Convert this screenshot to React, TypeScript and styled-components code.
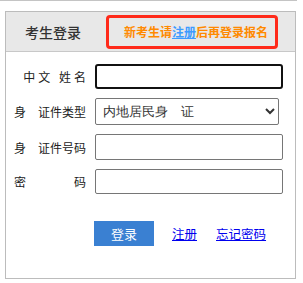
import React from 'react'
import styled, { createGlobalStyle } from 'styled-components'

const GlobalStyle = createGlobalStyle`
body {
    margin: 0;
    background: #fff;
    font-family: "Microsoft YaHei", "Noto Sans CJK SC", sans-serif;
}
`
const Page = styled.div`
width : 297px;
border-top : 1px solid #c4c4c4;
padding-top : 10px;
`
const Card = styled.div`
margin-left : 5px;
width : 291px;
height : 268px;
box-sizing : border-box;
border : 1px solid #bcbcbc;
`
const Header = styled.div`
height : 39px;
background : #e8e8e8;
border-bottom : 1px solid #c8c8c8;
display : flex;
align-items : center;
`
const Title = styled.div`
width : 100px;
padding-left : 19px;
box-sizing : border-box;
font-size : 14px;
font-weight : 500;
color : #333;
`
const Notice = styled.div`
width : 172px;
height : 34px;
box-sizing : border-box;
border : 3px solid #ff2a1a;
border-radius : 4px;
display : flex;
align-items : center;
padding-left : 15px;
font-size : 12px;
font-weight : bold;
color : #ff8a00;
white-space : nowrap;
a {
    color : #3d9bff;
    text-decoration : underline;
}
`
const Form = styled.div`
padding-top : 12px;
display : flex;
flex-direction : column;
gap : 9px;
`
const Row = styled.div`
display : flex;
align-items : center;
`
// spaced label carries a trailing letter-spacing, so its box is 3px wider
const Label = styled.div<{ $spaced?: boolean }>`
flex : none;
width : ${p => p.$spaced ? '83px' : '80px'};
text-align : right;
font-size : 12px;
color : #222;
white-space : pre;
letter-spacing : ${p => p.$spaced ? '3px' : '0'};
margin-right : ${p => p.$spaced ? '6px' : '9px'};
`
const Input = styled.input<{ $h: number; $focused?: boolean }>`
flex : none;
width : 188px;
height : ${p => p.$h}px;
box-sizing : border-box;
border : ${p => p.$focused ? '2px solid #111' : '1px solid #767676'};
border-radius : ${p => p.$focused ? '3px' : '2px'};
outline : none;
padding : 0 4px;
font-size : 13px;
`
const Select = styled.select`
flex : none;
width : 184px;
height : 27px;
box-sizing : border-box;
border : 1px solid #767676;
border-radius : 2px;
font-size : 13px;
color : #333;
padding-left : 3px;
background : #fff;
`
const Actions = styled.div`
margin-top : 27px;
padding-left : 88px;
display : flex;
align-items : center;
`
const LoginBtn = styled.button`
width : 60px;
height : 25px;
border : none;
background : #3a80d2;
color : #fff;
font-size : 13px;
font-family : inherit;
margin-right : 18px;
`
const Link = styled.a`
color : #0000ee;
text-decoration : underline;
font-size : 12.5px;
margin-right : 19px;
`

function App() {
    return (
        <Page>
            <GlobalStyle />
            <Card>
                <Header>
                    <Title>考生登录</Title>
                    <Notice>新考生请<a>注册</a>后再登录报名</Notice>
                </Header>
                <Form>
                    <Row>
                        <Label $spaced>中文 姓名</Label>
                        <Input $h={25} $focused />
                    </Row>
                    <Row>
                        <Label>身　证件类型</Label>
                        <Select defaultValue="1">
                            <option value="1">内地居民身　证</option>
                        </Select>
                    </Row>
                    <Row>
                        <Label>身　证件号码</Label>
                        <Input $h={26} />
                    </Row>
                    <Row>
                        <Label>密　　　　码</Label>
                        <Input $h={25} type="password" />
                    </Row>
                </Form>
                <Actions>
                    <LoginBtn>登录</LoginBtn>
                    <Link>注册</Link>
                    <Link>忘记密码</Link>
                </Actions>
            </Card>
        </Page>
    )
}

export default App
